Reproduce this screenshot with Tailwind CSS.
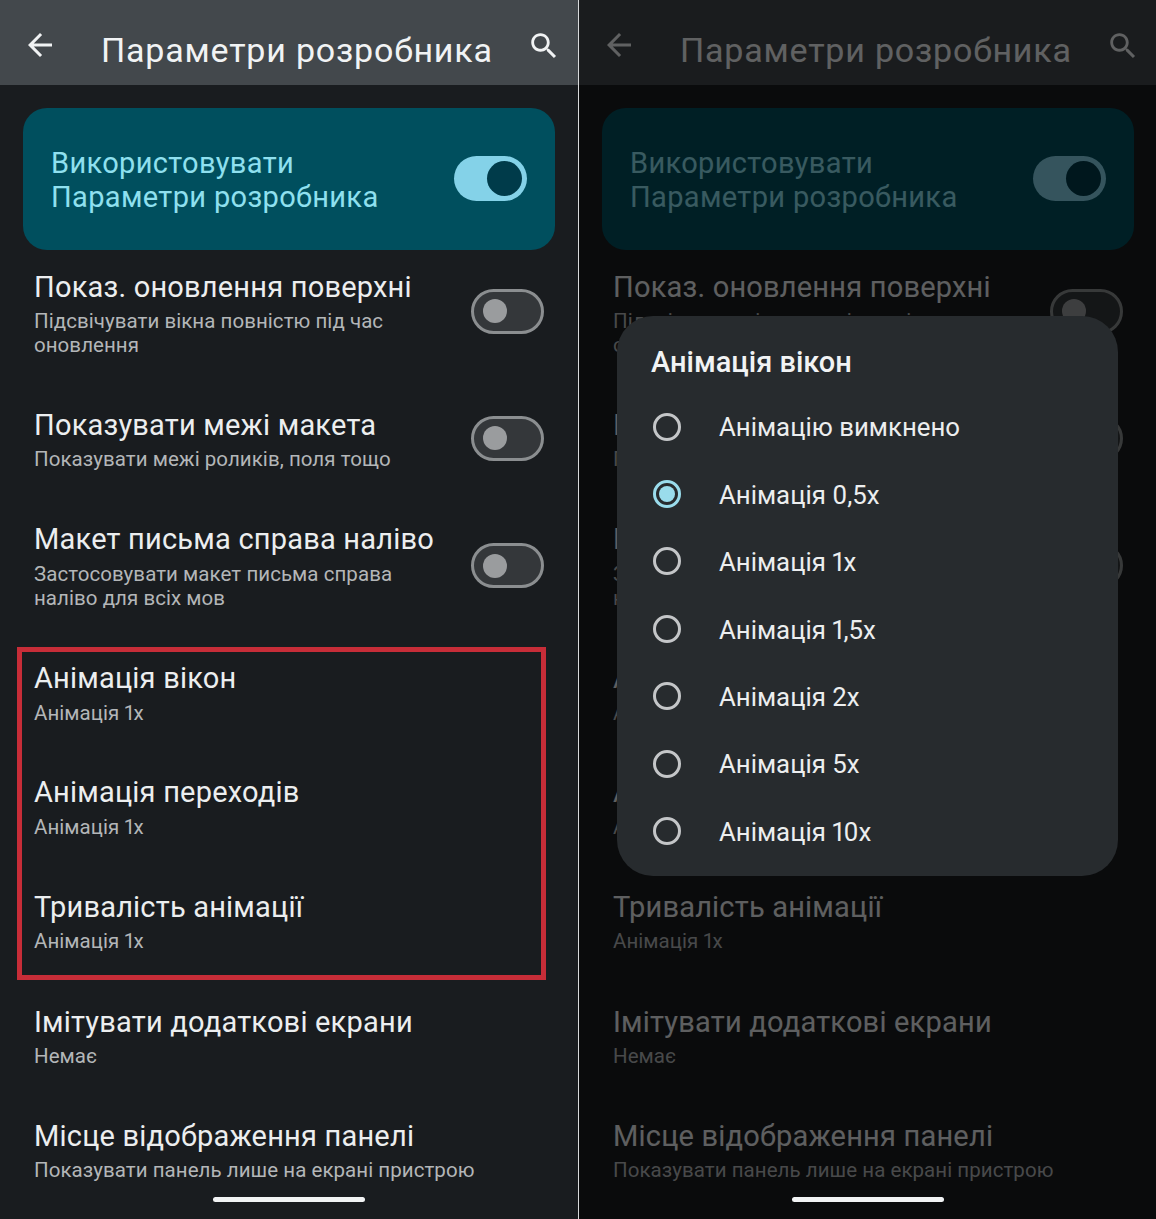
<!DOCTYPE html>
<html lang="uk">
<head>
  <meta charset="UTF-8">
  <title>Параметри розробника</title>
  <script src="https://cdn.jsdelivr.net/npm/@tailwindcss/browser@4"></script>
</head>
<body class="bg-[#191c1f]">
  <div class="flex w-[1156px] h-[1219px] overflow-hidden font-['Roboto',sans-serif] proportional-nums">

    <!-- left phone -->
    <div class="relative w-[578px] h-full shrink-0 bg-[#191c1f] overflow-hidden">
      <div class="flex items-start h-[85px] bg-[#43484c] text-[#f1f3f4]">
        <svg class="w-9 h-9 ml-[22px] mt-[27px] shrink-0 fill-current" viewBox="0 0 24 24"><path d="M20 11H7.83l5.59-5.59L12 4l-8 8 8 8 1.41-1.41L7.83 13H20v-2z"/></svg>
        <span class="ml-[43px] mt-[29px] text-[34px] leading-[42px] tracking-[0.8px] whitespace-nowrap">Параметри розробника</span>
        <svg class="w-[34px] h-[34px] ml-auto mr-[17px] mt-[29px] shrink-0 fill-current" viewBox="0 0 24 24"><path d="M15.5 14h-.79l-.28-.27C15.41 12.59 16 11.11 16 9.5 16 5.91 13.09 3 9.5 3S3 5.91 3 9.5 5.91 16 9.5 16c1.61 0 3.09-.59 4.23-1.57l.27.28v.79l5 4.99L20.49 19l-4.99-5zm-6 0C7.01 14 5 11.99 5 9.5S7.01 5 9.5 5 14 7.01 14 9.5 11.99 14 9.5 14z"/></svg>
      </div>
      <div class="flex items-center justify-between mt-[23px] ml-[23px] w-[532px] h-[142px] px-[28px] rounded-[24px] bg-[#004f5e]">
        <div class="mt-[2px] text-[#8fe0ef] text-[29px] leading-[34px] tracking-[0.35px]">Використовувати<br>Параметри розробника</div>
        <div class="flex items-center justify-end w-[73px] h-[45px] mb-[1px] pr-[5px] rounded-full bg-[#84d2e8]"><div class="w-[35px] h-[35px] rounded-full bg-[#003b4a]"></div></div>
      </div>
      <div class="mt-[19px] pl-[34px] pr-[34px]">
        <div class="flex justify-between items-center mb-[50px]">
          <div>
            <div class="text-[29px] leading-[36px] tracking-[0.2px] text-[#eceeef]">Показ. оновлення поверхні</div>
            <div class="mt-1 w-[400px] text-[20.5px] leading-[24px] tracking-[0.05px] text-[#b3b6b8]">Підсвічувати вікна повністю під час оновлення</div>
          </div>
          <div class="flex items-center w-[73px] h-[45px] mb-[4px] pl-[9px] rounded-full border-[3px] border-[#8b8e90] bg-[#34373a] shrink-0"><div class="w-[24px] h-[24px] rounded-full bg-[#9a9c9e]"></div></div>
        </div>
        <div class="flex justify-between items-center mb-[50px]">
          <div>
            <div class="text-[29px] leading-[36px] tracking-[0.2px] text-[#eceeef]">Показувати межі макета</div>
            <div class="mt-1 w-[400px] text-[20.5px] leading-[24px] tracking-[0.05px] text-[#b3b6b8]">Показувати межі роликів, поля тощо</div>
          </div>
          <div class="flex items-center w-[73px] h-[45px] mb-[2px] pl-[9px] rounded-full border-[3px] border-[#8b8e90] bg-[#34373a] shrink-0"><div class="w-[24px] h-[24px] rounded-full bg-[#9a9c9e]"></div></div>
        </div>
        <div class="flex justify-between items-center mb-[50px]">
          <div>
            <div class="text-[29px] leading-[36px] tracking-[0.2px] text-[#eceeef]">Макет письма справа наліво</div>
            <div class="mt-[5px] w-[400px] text-[20.5px] leading-[24px] tracking-[0.05px] text-[#b3b6b8]">Застосовувати макет письма справа наліво для всіх мов</div>
          </div>
          <div class="flex items-center w-[73px] h-[45px] pl-[9px] rounded-full border-[3px] border-[#8b8e90] bg-[#34373a] shrink-0"><div class="w-[24px] h-[24px] rounded-full bg-[#9a9c9e]"></div></div>
        </div>
        <div class="mb-[49px]">
          <div class="text-[29px] leading-[36px] tracking-[0.2px] text-[#eceeef]">Анімація вікон</div>
          <div class="mt-[5px] text-[20.5px] leading-[24px] tracking-[0.05px] text-[#b3b6b8]">Анімація 1x</div>
        </div>
        <div class="mb-[50px]">
          <div class="text-[29px] leading-[36px] tracking-[0.2px] text-[#eceeef]">Анімація переходів</div>
          <div class="mt-[5px] text-[20.5px] leading-[24px] tracking-[0.05px] text-[#b3b6b8]">Анімація 1x</div>
        </div>
        <div class="mb-[51px]">
          <div class="text-[29px] leading-[36px] tracking-[0.2px] text-[#eceeef]">Тривалість анімації</div>
          <div class="mt-1 text-[20.5px] leading-[24px] tracking-[0.05px] text-[#b3b6b8]">Анімація 1x</div>
        </div>
        <div class="mb-[50px]">
          <div class="text-[29px] leading-[36px] tracking-[0.2px] text-[#eceeef]">Імітувати додаткові екрани</div>
          <div class="mt-1 text-[20.5px] leading-[24px] tracking-[0.05px] text-[#b3b6b8]">Немає</div>
        </div>
        <div>
          <div class="text-[29px] leading-[36px] tracking-[0.2px] text-[#eceeef]">Місце відображення панелі</div>
          <div class="mt-1 text-[20.5px] leading-[24px] tracking-[0.05px] text-[#b3b6b8] whitespace-nowrap">Показувати панель лише на екрані пристрою</div>
        </div>
      </div>
      <!-- red highlight -->
      <div class="absolute left-[17px] top-[647px] w-[529px] h-[333px] border-[5px] border-[#c72d38]"></div>
      <div class="absolute left-[213px] top-[1197px] w-[152px] h-[5px] rounded-full bg-[#f1f3f4]"></div>
    </div>

    <div class="w-px h-full shrink-0 bg-[#d8dadb]"></div>

    <!-- right phone, same screen with the dialog open -->
    <div class="relative w-[577px] h-full shrink-0 bg-[#191c1f] overflow-hidden">
      <div class="flex items-start h-[85px] bg-[#43484c] text-[#f1f3f4]">
        <svg class="w-9 h-9 ml-[22px] mt-[27px] shrink-0 fill-current" viewBox="0 0 24 24"><path d="M20 11H7.83l5.59-5.59L12 4l-8 8 8 8 1.41-1.41L7.83 13H20v-2z"/></svg>
        <span class="ml-[43px] mt-[29px] text-[34px] leading-[42px] tracking-[0.8px] whitespace-nowrap">Параметри розробника</span>
        <svg class="w-[34px] h-[34px] ml-auto mr-[16px] mt-[29px] shrink-0 fill-current" viewBox="0 0 24 24"><path d="M15.5 14h-.79l-.28-.27C15.41 12.59 16 11.11 16 9.5 16 5.91 13.09 3 9.5 3S3 5.91 3 9.5 5.91 16 9.5 16c1.61 0 3.09-.59 4.23-1.57l.27.28v.79l5 4.99L20.49 19l-4.99-5zm-6 0C7.01 14 5 11.99 5 9.5S7.01 5 9.5 5 14 7.01 14 9.5 11.99 14 9.5 14z"/></svg>
      </div>
      <div class="flex items-center justify-between mt-[23px] ml-[23px] w-[532px] h-[142px] px-[28px] rounded-[24px] bg-[#004f5e]">
        <div class="mt-[2px] text-[#8fe0ef] text-[29px] leading-[34px] tracking-[0.35px]">Використовувати<br>Параметри розробника</div>
        <div class="flex items-center justify-end w-[73px] h-[45px] mb-[1px] pr-[5px] rounded-full bg-[#84d2e8]"><div class="w-[35px] h-[35px] rounded-full bg-[#003b4a]"></div></div>
      </div>
      <div class="mt-[19px] pl-[34px] pr-[33px]">
        <div class="flex justify-between items-center mb-[50px]">
          <div>
            <div class="text-[29px] leading-[36px] tracking-[0.2px] text-[#eceeef]">Показ. оновлення поверхні</div>
            <div class="mt-1 w-[400px] text-[20.5px] leading-[24px] tracking-[0.05px] text-[#b3b6b8]">Підсвічувати вікна повністю під час оновлення</div>
          </div>
          <div class="flex items-center w-[73px] h-[45px] mb-[4px] pl-[9px] rounded-full border-[3px] border-[#8b8e90] bg-[#34373a] shrink-0"><div class="w-[24px] h-[24px] rounded-full bg-[#9a9c9e]"></div></div>
        </div>
        <div class="flex justify-between items-center mb-[50px]">
          <div>
            <div class="text-[29px] leading-[36px] tracking-[0.2px] text-[#eceeef]">Показувати межі макета</div>
            <div class="mt-1 w-[400px] text-[20.5px] leading-[24px] tracking-[0.05px] text-[#b3b6b8]">Показувати межі роликів, поля тощо</div>
          </div>
          <div class="flex items-center w-[73px] h-[45px] mb-[2px] pl-[9px] rounded-full border-[3px] border-[#8b8e90] bg-[#34373a] shrink-0"><div class="w-[24px] h-[24px] rounded-full bg-[#9a9c9e]"></div></div>
        </div>
        <div class="flex justify-between items-center mb-[50px]">
          <div>
            <div class="text-[29px] leading-[36px] tracking-[0.2px] text-[#eceeef]">Макет письма справа наліво</div>
            <div class="mt-[5px] w-[400px] text-[20.5px] leading-[24px] tracking-[0.05px] text-[#b3b6b8]">Застосовувати макет письма справа наліво для всіх мов</div>
          </div>
          <div class="flex items-center w-[73px] h-[45px] pl-[9px] rounded-full border-[3px] border-[#8b8e90] bg-[#34373a] shrink-0"><div class="w-[24px] h-[24px] rounded-full bg-[#9a9c9e]"></div></div>
        </div>
        <div class="mb-[49px]">
          <div class="text-[29px] leading-[36px] tracking-[0.2px] text-[#eceeef]">Анімація вікон</div>
          <div class="mt-[5px] text-[20.5px] leading-[24px] tracking-[0.05px] text-[#b3b6b8]">Анімація 1x</div>
        </div>
        <div class="mb-[50px]">
          <div class="text-[29px] leading-[36px] tracking-[0.2px] text-[#eceeef]">Анімація переходів</div>
          <div class="mt-[5px] text-[20.5px] leading-[24px] tracking-[0.05px] text-[#b3b6b8]">Анімація 1x</div>
        </div>
        <div class="mb-[51px]">
          <div class="text-[29px] leading-[36px] tracking-[0.2px] text-[#eceeef]">Тривалість анімації</div>
          <div class="mt-1 text-[20.5px] leading-[24px] tracking-[0.05px] text-[#b3b6b8]">Анімація 1x</div>
        </div>
        <div class="mb-[50px]">
          <div class="text-[29px] leading-[36px] tracking-[0.2px] text-[#eceeef]">Імітувати додаткові екрани</div>
          <div class="mt-1 text-[20.5px] leading-[24px] tracking-[0.05px] text-[#b3b6b8]">Немає</div>
        </div>
        <div>
          <div class="text-[29px] leading-[36px] tracking-[0.2px] text-[#eceeef]">Місце відображення панелі</div>
          <div class="mt-1 text-[20.5px] leading-[24px] tracking-[0.05px] text-[#b3b6b8] whitespace-nowrap">Показувати панель лише на екрані пристрою</div>
        </div>
      </div>
      <!-- scrim -->
      <div class="absolute inset-0 bg-black/60"></div>
      <div class="absolute left-[213px] top-[1197px] w-[152px] h-[5px] rounded-full bg-[#f1f3f4]"></div>
      <!-- dialog -->
      <div class="absolute left-[38px] top-[316px] w-[501px] h-[560px] rounded-[36px] bg-[#272b2e] pl-[34px] pt-[26px]">
        <div class="text-[29px] leading-[40px] font-medium text-[#f1f3f4]">Анімація вікон</div>
        <div class="mt-[11px] flex flex-col text-[25.8px] text-[#eceeef]">
          <div class="flex items-center h-[67.4px]"><span class="ml-[2px] w-[28px] h-[28px] rounded-full border-[3px] border-[#c4c6c8]"></span><span class="ml-[38px] mt-[2px]">Анімацію вимкнено</span></div>
          <div class="flex items-center h-[67.4px]"><span class="ml-[2px] flex items-center justify-center w-[28px] h-[28px] rounded-full border-[3px] border-[#9adcec]"><span class="w-[16px] h-[16px] rounded-full bg-[#9adcec]"></span></span><span class="ml-[38px] mt-[2px]">Анімація 0,5x</span></div>
          <div class="flex items-center h-[67.4px]"><span class="ml-[2px] w-[28px] h-[28px] rounded-full border-[3px] border-[#c4c6c8]"></span><span class="ml-[38px] mt-[2px]">Анімація 1x</span></div>
          <div class="flex items-center h-[67.4px]"><span class="ml-[2px] w-[28px] h-[28px] rounded-full border-[3px] border-[#c4c6c8]"></span><span class="ml-[38px] mt-[2px]">Анімація 1,5x</span></div>
          <div class="flex items-center h-[67.4px]"><span class="ml-[2px] w-[28px] h-[28px] rounded-full border-[3px] border-[#c4c6c8]"></span><span class="ml-[38px] mt-[2px]">Анімація 2x</span></div>
          <div class="flex items-center h-[67.4px]"><span class="ml-[2px] w-[28px] h-[28px] rounded-full border-[3px] border-[#c4c6c8]"></span><span class="ml-[38px] mt-[2px]">Анімація 5x</span></div>
          <div class="flex items-center h-[67.4px]"><span class="ml-[2px] w-[28px] h-[28px] rounded-full border-[3px] border-[#c4c6c8]"></span><span class="ml-[38px] mt-[2px]">Анімація 10x</span></div>
        </div>
      </div>
    </div>

  </div>
</body>
</html>
